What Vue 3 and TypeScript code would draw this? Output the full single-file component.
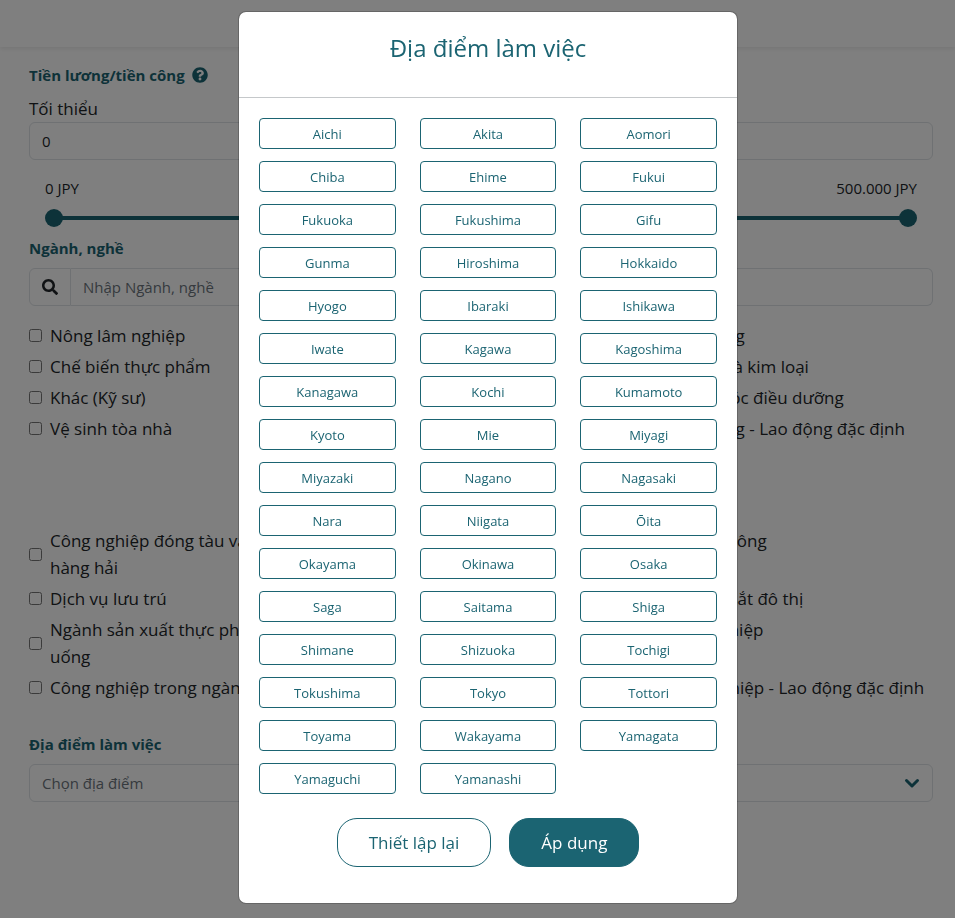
<script setup lang="ts">
import { ref } from 'vue'

interface Field {
  label: string
  column: 'first' | 'last'
}

const prefectures: string[] = [
  'Aichi', 'Akita', 'Aomori', 'Chiba', 'Ehime', 'Fukui', 'Fukuoka', 'Fukushima', 'Gifu',
  'Gunma', 'Hiroshima', 'Hokkaido', 'Hyogo', 'Ibaraki', 'Ishikawa', 'Iwate', 'Kagawa', 'Kagoshima',
  'Kanagawa', 'Kochi', 'Kumamoto', 'Kyoto', 'Mie', 'Miyagi', 'Miyazaki', 'Nagano', 'Nagasaki',
  'Nara', 'Niigata', 'Ōita', 'Okayama', 'Okinawa', 'Osaka', 'Saga', 'Saitama', 'Shiga',
  'Shimane', 'Shizuoka', 'Tochigi', 'Tokushima', 'Tokyo', 'Tottori', 'Toyama', 'Wakayama', 'Yamagata',
  'Yamaguchi', 'Yamanashi',
]

const fieldGroups: Field[][] = [
  [
    { label: 'Nông lâm nghiệp', column: 'first' },
    { label: 'Xây dựng', column: 'last' },
    { label: 'Chế biến thực phẩm', column: 'first' },
    { label: 'Cơ khí và kim loại', column: 'last' },
    { label: 'Khác (Kỹ sư)', column: 'first' },
    { label: 'Chăm sóc điều dưỡng', column: 'last' },
    { label: 'Vệ sinh tòa nhà', column: 'first' },
    { label: 'Xây dựng - Lao động đặc định', column: 'last' },
  ],
  [
    { label: 'Công nghiệp đóng tàu và hàng\u00a0hải', column: 'first' },
    { label: 'Hàng không', column: 'last' },
    { label: 'Dịch vụ lưu trú', column: 'first' },
    { label: 'Đường sắt đô thị', column: 'last' },
    { label: 'Ngành sản xuất thực phẩm đồ uống', column: 'first' },
    { label: 'Ngư nghiệp', column: 'last' },
    { label: 'Công nghiệp trong ngành', column: 'first' },
    { label: 'Lâm nghiệp - Lao động đặc định', column: 'last' },
  ],
]

const minSalary = ref('0')
const rangeLow = ref(0)
const rangeHigh = ref(500000)
const keyword = ref('')
const selected = ref<string[]>([])

function toggle(name: string): void {
  selected.value = selected.value.includes(name)
    ? selected.value.filter((item) => item !== name)
    : [...selected.value, name]
}

function reset(): void {
  selected.value = []
}
</script>

<template>
  <div class="page">
    <header class="topbar"></header>

    <main class="filters">
      <h2 class="heading">
        Tiền lương/tiền công
        <svg class="help" viewBox="0 0 512 512" aria-hidden="true">
          <path d="M504 256c0 137-111 248-248 248S8 393 8 256 119 8 256 8s248 111 248 248zM262.700 90c-54.500 0-89.300 23-116.500 63.800-3.500 5.300-2.400 12.400 2.700 16.300l34.700 26.300c5.200 3.900 12.600 3 16.700-2.100 17.900-22.700 30.100-35.800 57.300-35.800 20.400 0 45.700 13.100 45.700 33 0 15-12.400 22.700-32.500 34C247.100 238.500 216 254.900 216 296v4c0 6.600 5.400 12 12 12h56c6.600 0 12-5.400 12-12v-1.300c0-28.500 83.200-29.600 83.200-106.700 0-58-60.200-102-116.500-102zM256 338c-25.400 0-46 20.600-46 46s20.600 46 46 46 46-20.600 46-46-20.600-46-46-46z" />
        </svg>
      </h2>
      <label class="caption" for="min-salary">Tối thiểu</label>
      <input id="min-salary" v-model="minSalary" class="control" type="text" />

      <div class="range">
        <div class="range-labels"><span>0 JPY</span><span>500.000 JPY</span></div>
        <div class="sliders">
          <input v-model.number="rangeLow" class="slider track" type="range" min="0" max="500000" aria-label="0 JPY" />
          <input v-model.number="rangeHigh" class="slider" type="range" min="0" max="500000" aria-label="500.000 JPY" />
        </div>
      </div>

      <label class="heading" for="keyword">Ngành, nghề</label>
      <div class="search">
        <span class="search-icon">
          <svg viewBox="0 0 512 512" aria-hidden="true">
            <path d="M505 442.700L405.300 343c-4.500-4.500-10.600-7-17-7H372c27.600-35.300 44-79.700 44-128C416 93.100 322.900 0 208 0S0 93.100 0 208s93.100 208 208 208c48.300 0 92.700-16.400 128-44v16.300c0 6.400 2.500 12.500 7 17l99.700 99.700c9.400 9.400 24.600 9.400 33.900 0l28.300-28.300c9.400-9.400 9.400-24.600.1-34zM208 336c-70.700 0-128-57.200-128-128 0-70.700 57.200-128 128-128 70.700 0 128 57.200 128 128 0 70.700-57.200 128-128 128z" />
          </svg>
        </span>
        <input id="keyword" v-model="keyword" class="control" type="text" placeholder="Nhập Ngành, nghề" />
      </div>

      <div class="groups">
        <div v-for="(group, index) in fieldGroups" :key="index" class="fields">
          <label v-for="field in group" :key="field.label" class="field" :class="field.column">
            <input type="checkbox" />
            <span>{{ field.label }}</span>
          </label>
        </div>
      </div>

      <label class="heading" for="place">Địa điểm làm việc</label>
      <div class="select">
        <select id="place" class="control">
          <option>Chọn địa điểm</option>
        </select>
        <svg class="chevron" viewBox="0 0 16 16" aria-hidden="true">
          <path d="M2.500 5.500L8 11l5.500-5.500" />
        </svg>
      </div>
    </main>

    <div class="overlay">
      <section class="modal" role="dialog" aria-modal="true" aria-labelledby="modal-title">
        <header class="modal-header">
          <h1 id="modal-title">Địa điểm làm việc</h1>
        </header>
        <div class="prefectures">
          <button
            v-for="name in prefectures"
            :key="name"
            type="button"
            class="prefecture"
            :class="{ active: selected.includes(name) }"
            @click="toggle(name)"
          >
            {{ name }}
          </button>
        </div>
        <footer class="actions">
          <button type="button" class="action" @click="reset">Thiết lập lại</button>
          <button type="button" class="action primary">Áp dụng</button>
        </footer>
      </section>
    </div>
  </div>
</template>

<style>
body {
  background: #fff;
}
</style>

<style scoped>
.page,
.page * {
  box-sizing: border-box;
}

.page {
  --teal: #1b6472;
  min-height: 100vh;
  color: #212529;
  font-family: "Segoe UI", "Open Sans", "Noto Sans", sans-serif;
  font-size: 17px;
  line-height: 27px;
}

button,
input,
select {
  font: inherit;
}

.topbar {
  height: 47px;
  background: #fff;
  box-shadow: 0 2px 4px rgba(0, 0, 0, 0.08);
}

.filters {
  display: flex;
  flex-direction: column;
  padding: 16px 22px 0 29px;
}

.heading {
  display: flex;
  align-items: center;
  gap: 7px;
  margin: 0;
  color: var(--teal);
  font-size: 15px;
  font-weight: 700;
  line-height: 24px;
}

.help {
  width: 16px;
  height: 16px;
  fill: currentColor;
}

.caption {
  margin-top: 8px;
}

.control {
  display: block;
  width: 100%;
  height: 38px;
  padding: 0 12px;
  border: 1px solid #dee2e6;
  border-radius: 6px;
  background: #fff;
  color: #212529;
  font-size: 15px;
}

.control::placeholder {
  color: #6c757d;
  opacity: 1;
}

.range {
  padding: 16px;
  padding-bottom: 9px;
}

.range-labels {
  display: flex;
  justify-content: space-between;
  font-size: 15px;
  line-height: 24px;
}

.sliders {
  display: grid;
  margin-top: 9px;
}

.slider {
  grid-area: 1 / 1;
  width: 100%;
  height: 18px;
  margin: 0;
  appearance: none;
  background: transparent;
}

.slider.track {
  background: linear-gradient(var(--teal), var(--teal)) center / calc(100% - 18px) 4px no-repeat;
}

.slider::-webkit-slider-thumb {
  width: 18px;
  height: 18px;
  appearance: none;
  border-radius: 50%;
  background: var(--teal);
}

.search {
  display: flex;
  margin-top: 8px;
}

.search-icon {
  display: flex;
  flex: none;
  align-items: center;
  justify-content: center;
  width: 42px;
  border: 1px solid #dee2e6;
  border-radius: 6px 0 0 6px;
}

.search-icon svg {
  width: 16px;
  height: 16px;
  fill: #212529;
}

.search .control {
  border-left: 0;
  border-radius: 0 6px 6px 0;
}

.groups {
  display: grid;
  gap: 85px;
  padding: 16px 0 31px;
}

.fields {
  display: grid;
  grid-template-columns: repeat(3, 1fr);
  align-items: start;
  gap: 4px 28px;
}

.field {
  display: flex;
  align-items: center;
  gap: 8px;
}

.field.first {
  grid-column: 1;
  padding-right: 18px;
}

.field.last {
  grid-column: 3;
}

.field input {
  flex: none;
  width: 13px;
  height: 13px;
  margin: 0;
}

.select {
  position: relative;
  margin-top: 8px;
}

.select .control {
  appearance: none;
  color: #6c757d;
}

.chevron {
  position: absolute;
  top: 11px;
  right: 13px;
  width: 16px;
  height: 16px;
  fill: none;
  stroke: var(--teal);
  stroke-width: 3;
  stroke-linecap: round;
  stroke-linejoin: round;
  pointer-events: none;
}

.overlay {
  position: fixed;
  inset: 0;
  display: flex;
  align-items: flex-start;
  justify-content: center;
  padding: 11px 0 11px 21px;
  overflow: auto;
  background: rgba(0, 0, 0, 0.5);
}

.modal {
  width: 100%;
  max-width: 500px;
  border: 1px solid rgba(0, 0, 0, 0.2);
  border-radius: 8px;
  background: #fff;
  background-clip: padding-box;
}

.modal-header {
  padding: 18px 20px 31px;
  border-bottom: 1px solid #c5c8ca;
}

.modal-header h1 {
  margin: 0;
  color: var(--teal);
  font-size: 24px;
  font-weight: 400;
  line-height: 36px;
  text-align: center;
}

.prefectures {
  display: grid;
  grid-template-columns: repeat(3, 1fr);
  gap: 12px 24px;
  padding: 20px 20px 24px;
}

.prefecture {
  height: 31px;
  padding: 0 8px;
  border: 1px solid var(--teal);
  border-radius: 4px;
  background: #fff;
  color: var(--teal);
  font-size: 13px;
  line-height: 20px;
}

.prefecture.active {
  background: var(--teal);
  color: #fff;
}

.actions {
  display: flex;
  justify-content: center;
  gap: 18px;
  padding-bottom: 36px;
}

.action {
  height: 49px;
  padding: 0 31px;
  border: 1px solid var(--teal);
  border-radius: 20px;
  background: #fff;
  color: var(--teal);
}

.action.primary {
  background: var(--teal);
  color: #fff;
}
</style>
